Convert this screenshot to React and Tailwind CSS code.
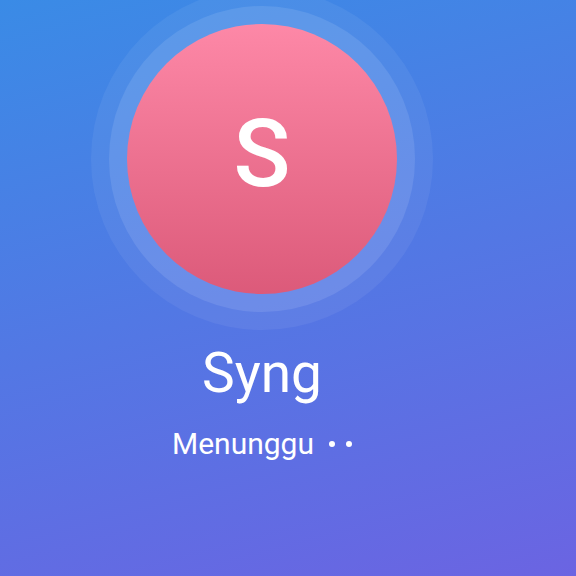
export default function App() {
  return (
    <div className="w-[576px] h-[576px] overflow-hidden bg-linear-[165deg] from-[#3a8be6] to-[#6b64e2] font-['Roboto',sans-serif] text-white">
      <div className="w-[524px] flex flex-col items-center">
        <div className="-mt-[12px] w-[342px] h-[342px] rounded-full bg-white/[0.06] flex items-center justify-center">
          <div className="w-[306px] h-[306px] rounded-full bg-white/[0.1] flex items-center justify-center">
            <div className="w-[270px] h-[270px] rounded-full bg-linear-to-b from-[#fd88a7] to-[#dc5a7a] flex items-center justify-center">
              <span className="text-[94px] leading-none font-medium -mt-[10px]">S</span>
            </div>
          </div>
        </div>
        <div className="mt-[16px] text-[55px] leading-none">Syng</div>
        <div className="mt-[28px] flex items-center text-[30px] leading-none">
          <span>Menunggu</span>
          <span className="ml-[15px] w-[6px] h-[6px] rounded-full bg-white"></span>
          <span className="ml-[11px] w-[6px] h-[6px] rounded-full bg-white"></span>
        </div>
      </div>
    </div>
  );
}
